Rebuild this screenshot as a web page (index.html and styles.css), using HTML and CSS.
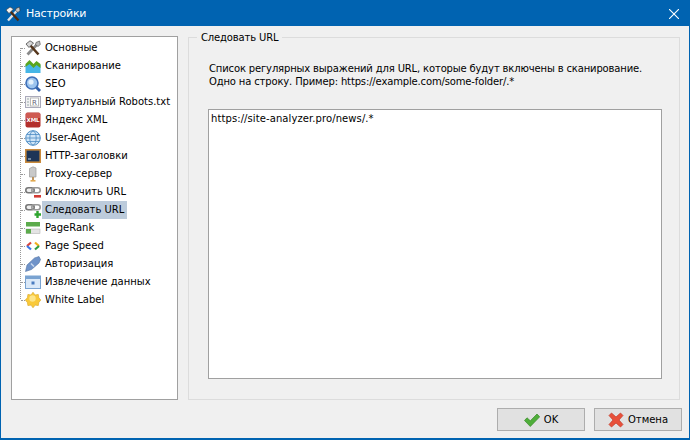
FILE: index.html
```html
<!DOCTYPE html>
<html lang="ru">
<head>
<meta charset="utf-8">
<title>Настройки</title>
<link rel="stylesheet" href="styles.css">
</head>
<body>
<div class="window">
  <header class="titlebar">
    <svg class="title-icon" viewBox="0 0 16 16" width="16" height="16"><path d="M3 14.500 12.500 4" stroke="#e2e2e2" stroke-width="2.400"/><path d="M13.500 14.500 5 5" stroke="#4a2c14" stroke-width="2.400"/><path d="M1 4 5 1 8.500 3 4 7.500Z" fill="#f2f2f2" stroke="#333" stroke-width=".6"/><path d="M11 2.500 14.500 1 15 4.500 13 6.500 10.500 4.500Z" fill="#c4c4c4" stroke="#333" stroke-width=".6"/></svg>
    <span class="title-text">Настройки</span>
    <svg class="close" viewBox="0 0 10 10" width="10" height="10"><path d="M0 0 10 10M10 0 0 10" stroke="#fff" stroke-width="1.100"/></svg>
  </header>
  <main class="content">
    <div class="panes">
      <nav class="tree">
        <ul class="tree-list">
          <li class="row"><span class="dash"></span><svg class="ico" viewBox="0 0 16 16"><path d="M2.500 14.500 12.500 4" stroke="#8a8a8a" stroke-width="2.800"/><path d="M13.500 14.500 5 5" stroke="#55361c" stroke-width="2.600"/><path d="M1 4 5 .8 8.500 3 4 7.500Z" fill="#d8d8d8" stroke="#333" stroke-width=".7"/><path d="M11 2.500 14.500 1 15.300 4.500 13 6.500 10.500 4.500Z" fill="#bbb" stroke="#444" stroke-width=".6"/></svg><span class="label">Основные</span></li>
          <li class="row"><span class="dash"></span><svg class="ico" viewBox="0 0 16 16"><path d="M.5 15V7l4-3.500 4 4 3-3 4 2.500v8Z" fill="#46b6e6"/><path d="M.5 9V6l4-4 4 4 3-3 4 3v4l-4-3-3 3-4-4Z" fill="#5aa61e"/></svg><span class="label">Сканирование</span></li>
          <li class="row"><span class="dash"></span><svg class="ico" viewBox="0 0 16 16"><path d="M10.500 10.500 15 15" stroke="#2f5ea8" stroke-width="2.800"/><circle cx="7" cy="7" r="6" fill="#9cc4ee" stroke="#3d6fb8" stroke-width="1.600"/><circle cx="6" cy="6" r="2.600" fill="#e4f1fc"/></svg><span class="label">SEO</span></li>
          <li class="row"><span class="dash"></span><svg class="ico" viewBox="0 0 16 16"><rect x=".5" y="2.500" width="15" height="11" fill="#f2f2f2" stroke="#aab"/><path d="M2 5h2M2 8h2M2 11h2" stroke="#9aa"/><rect x="5.500" y="4" width="8" height="8" fill="#fff" stroke="#bbb"/><text class="ico-text-r" x="9.500" y="10.500" text-anchor="middle">R</text></svg><span class="label">Виртуальный Robots.txt</span></li>
          <li class="row"><span class="dash"></span><svg class="ico" viewBox="0 0 16 16"><rect x=".5" y=".5" width="15" height="15" rx="2" fill="#b3302c"/><path d="M1 1h14v5H1z" fill="#cf5a52"/><text class="ico-text-x" x="8" y="10.300" text-anchor="middle">XML</text></svg><span class="label">Яндекс XML</span></li>
          <li class="row"><span class="dash"></span><svg class="ico" viewBox="0 0 16 16"><circle cx="8" cy="8" r="7.300" fill="#cfe5f7" stroke="#4c8cc4"/><ellipse cx="8" cy="8" rx="3.200" ry="7" fill="none" stroke="#4c8cc4" stroke-width=".8"/><path d="M1 8h14M2 4.500h12M2 11.500h12" stroke="#4c8cc4" stroke-width=".8"/></svg><span class="label">User-Agent</span></li>
          <li class="row"><span class="dash"></span><svg class="ico" viewBox="0 0 16 16"><rect x=".8" y="1.800" width="14.400" height="12.400" fill="#1d3557" stroke="#c98a3c" stroke-width="1.600"/><path d="M3 11h3" stroke="#cde"/></svg><span class="label">HTTP-заголовки</span></li>
          <li class="row"><span class="dash"></span><svg class="ico" viewBox="0 0 16 16"><path d="M4.500 2.500 8 .8 11 2V11H4.500Z" fill="#c9c9c9" stroke="#999" stroke-width=".7"/><path d="M8 11v3" stroke="#b98a4e" stroke-width="1.800"/><path d="M5.500 14.800h5" stroke="#e0a850" stroke-width="1.600"/></svg><span class="label">Proxy-сервер</span></li>
          <li class="row"><span class="dash"></span><svg class="ico" viewBox="0 0 16 16"><rect x=".8" y="3.800" width="8.400" height="5" rx="2.500" fill="#eee" stroke="#777" stroke-width="1.600"/><rect x="6.800" y="3.800" width="8.400" height="5" rx="2.500" fill="none" stroke="#999" stroke-width="1.600"/><rect x="9" y="11" width="7" height="2.600" fill="#d23a33"/></svg><span class="label">Исключить URL</span></li>
          <li class="row"><span class="dash"></span><svg class="ico" viewBox="0 0 16 16"><rect x=".8" y="2.800" width="8.400" height="5" rx="2.500" fill="#eee" stroke="#777" stroke-width="1.600"/><rect x="6.800" y="2.800" width="8.400" height="5" rx="2.500" fill="none" stroke="#999" stroke-width="1.600"/><path d="M12.500 9v7M9.500 12.500h6.500" stroke="#2fa52f" stroke-width="2.400"/></svg><span class="label selected">Следовать URL</span></li>
          <li class="row"><span class="dash"></span><svg class="ico" viewBox="0 0 16 16"><rect x="1" y="2" width="14" height="4.500" fill="#5cab4c"/><rect x="1" y="9" width="14" height="4.500" fill="#e4e4e4" stroke="#aaa" stroke-width=".5"/><rect x="1" y="9" width="5" height="4.500" fill="#5cab4c"/></svg><span class="label">PageRank</span></li>
          <li class="row"><span class="dash"></span><svg class="ico" viewBox="0 0 16 16"><path d="M6 4.500 2 8" fill="none" stroke="#d9433a" stroke-width="2.200"/><path d="M10 4.500 14 8" fill="none" stroke="#f2b01e" stroke-width="2.200"/><path d="M14 8 10 11.500" fill="none" stroke="#2f9e44" stroke-width="2.200"/><path d="M2 8 6 11.500" fill="none" stroke="#3b78e7" stroke-width="2.200"/></svg><span class="label">Page Speed</span></li>
          <li class="row"><span class="dash"></span><svg class="ico" viewBox="0 0 16 16"><path d="M.5 15.500 2 9 9.500 2 14 .5 15.500 3.500 14 7 6.500 13.500Z" fill="#6f93c9" stroke="#5575a5" stroke-width=".6"/><path d="M6 7.500 9 10.500" stroke="#c8d8ee" stroke-width="1.500"/></svg><span class="label">Авторизация</span></li>
          <li class="row"><span class="dash"></span><svg class="ico" viewBox="0 0 16 16"><rect x=".5" y="2" width="15" height="12.500" fill="#dbe9f8" stroke="#7aa3d1"/><path d="M.5 2h15v3H.5z" fill="#7aa3d1"/><rect x="6.500" y="7.500" width="3" height="3" fill="#4a7cc0"/></svg><span class="label">Извлечение данных</span></li>
          <li class="row"><span class="dash"></span><svg class="ico" viewBox="0 0 16 16"><path d="M8 .2 10 3l3.300-.6.500 3.300 2 2.300-2 2.500-.5 3.100-3.100-.5L8 15.800 6 13.100l-3.100.5-.5-3.100L.3 8l2.100-2.300.5-3.300L6 3Z" fill="#f9c93a" stroke="#d9a520" stroke-width=".6"/><circle cx="7.500" cy="6.500" r="3.200" fill="#fde58a"/></svg><span class="label">White Label</span></li>
        </ul>
      </nav>
      <section class="group">
        <h2 class="legend">Следовать URL</h2>
        <p class="hint">Список регулярных выражений для URL, которые будут включены в сканирование.<br>Одно на строку. Пример: https://example.com/some-folder/.*</p>
        <div class="editor">https://site-analyzer.pro/news/.*</div>
      </section>
    </div>
    <footer class="actions">
      <button class="btn" type="button"><svg class="btn-ico" viewBox="0 0 16 16"><path d="M.5 8.500 3 5.800 6.300 8.800 13 2 15.700 4.800 6.300 14.500Z" fill="#4fae3a" stroke="#3a8a2a" stroke-width=".7"/></svg>OK</button>
      <button class="btn" type="button"><svg class="btn-ico" viewBox="0 0 16 16"><path d="M1 3.500 3.500 1 8 5 12.500 1 15 3.500 11 8 15 12.500 12.500 15 8 11 3.500 15 1 12.500 5 8Z" fill="#e8503a" stroke="#c23a28" stroke-width=".7"/></svg>Отмена</button>
    </footer>
  </main>
</div>
</body>
</html>
```
FILE: styles.css
```css
* { box-sizing: border-box; }
html, body { margin: 0; padding: 0; }
body {
  width: 690px;
  height: 440px;
  overflow: hidden;
  font-family: "DejaVu Sans", sans-serif;
  font-size: 10px;
  color: #000;
}
.window {
  width: 690px;
  height: 440px;
  display: flex;
  flex-direction: column;
  border: 1px solid #0063b1;
  border-bottom-width: 2px;
  background: #f0f0f0;
}
.titlebar {
  height: 25px;
  flex: none;
  background: #0063b1;
  color: #fff;
  display: flex;
  align-items: center;
  padding: 0 10px 0 4px;
  gap: 5px;
  font-size: 11px;
  letter-spacing: -.2px;
}
.title-icon { flex: none; }
.title-text { flex: 1; }
.close { flex: none; }
.content {
  flex: 1;
  display: flex;
  flex-direction: column;
  padding: 10px 7px 7px 10px;
}
.panes {
  flex: 1;
  display: flex;
  gap: 10px;
  min-height: 0;
}
.tree {
  width: 167px;
  height: 364px;
  flex: none;
  background: #fff;
  border: 1px solid #a0a0a0;
  padding: 2px 0 0 8px;
}
.tree-list {
  list-style: none;
  margin: 0;
  padding: 0 0 0 1px;
  height: 270px;
  background: repeating-linear-gradient(#999 0 1px, transparent 1px 2px) no-repeat 0 9px / 1px 252px;
}
.row {
  height: 18px;
  display: flex;
  align-items: center;
}
.dash {
  width: 4px;
  flex: none;
  border-top: 1px dotted #999;
}
.ico {
  width: 16px;
  height: 16px;
  flex: none;
  margin-right: 1px;
}
.ico-text-r {
  font-family: "DejaVu Sans", sans-serif;
  font-size: 7px;
  fill: #667;
}
.ico-text-x {
  font-family: "DejaVu Sans", sans-serif;
  font-size: 5.500px;
  font-weight: bold;
  fill: #fff;
}
.label {
  height: 18px;
  line-height: 18px;
  padding: 0 3px;
  white-space: nowrap;
}
.selected { background: #bccbdb; }
.group {
  width: 492px;
  height: 363px;
  margin-top: 1px;
  border: 1px solid #dcdcdc;
  padding: 0 17px 20px 19px;
  display: flex;
  flex-direction: column;
}
.legend {
  margin: -7px 0 0 -11px;
  padding: 0 4px;
  align-self: flex-start;
  background: #f0f0f0;
  font-size: 10px;
  font-weight: normal;
  line-height: 13px;
  height: 13px;
  letter-spacing: -.15px;
}
.hint {
  margin: 18px 0 0 1px;
  line-height: 13px;
  height: 26px;
  letter-spacing: -.15px;
}
.editor {
  margin-top: 21px;
  flex: 1;
  background: #fff;
  border: 1px solid #a0a0a0;
  padding: 2px 2px;
  line-height: 13px;
  letter-spacing: .09px;
}
.actions {
  flex: none;
  display: flex;
  justify-content: flex-end;
  gap: 9px;
  padding-top: 8px;
}
.btn {
  width: 88px;
  height: 23px;
  background: #e1e1e1;
  border: 1px solid #adadad;
  font: inherit;
  color: #000;
  display: flex;
  align-items: center;
  justify-content: center;
  gap: 4px;
  padding: 0;
}
.btn-ico { width: 16px; height: 16px; flex: none; }
```
